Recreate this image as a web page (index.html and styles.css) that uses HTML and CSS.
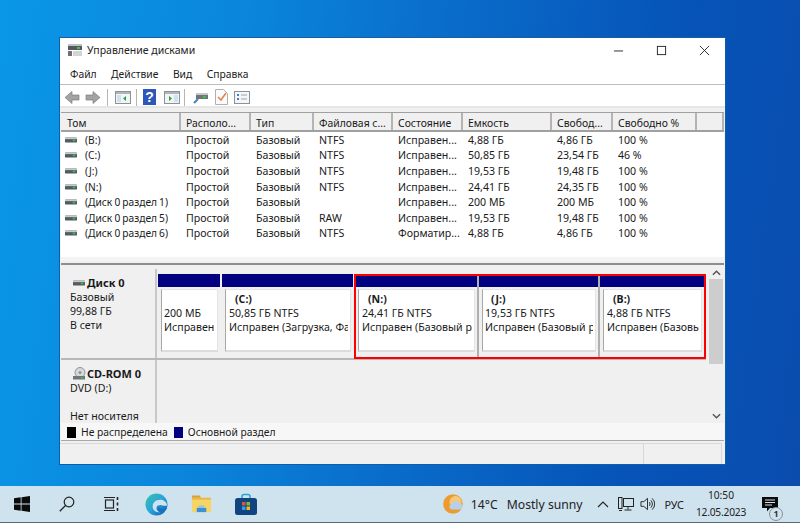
FILE: index.html
```html
<!DOCTYPE html>
<html lang="ru">
<head>
<meta charset="utf-8">
<title>Управление дисками</title>
<link rel="stylesheet" href="styles.css">
</head>
<body>
<svg class="defs" width="0" height="0">
  <symbol id="hdd" viewBox="0 0 14 8">
    <rect x="0" y="1" width="14" height="6" rx="1" fill="#555a5e"/>
    <rect x="0" y="1" width="14" height="2" fill="#c5c9cc"/>
    <rect x="9" y="3.500" width="3" height="2" fill="#35c24a"/>
  </symbol>
</svg>
<div class="desktop">
  <main class="window">
    <header class="titlebar">
      <svg class="app-icon" viewBox="0 0 16 14"><rect x="1" y="1" width="14" height="6" fill="#55595c"/><rect x="1" y="1" width="14" height="2" fill="#bfc3c6"/><rect x="10" y="4" width="3" height="2" fill="#3ec24f"/><rect x="1" y="8" width="4" height="5" fill="#6f6f6f"/><rect x="6" y="8" width="9" height="5" fill="#d4d4d4"/></svg>
      <span class="title">Управление дисками</span>
      <div class="controls">
        <svg viewBox="0 0 12 12"><path d="M1 6.500h10" stroke="#222" stroke-width="1"/></svg>
        <svg viewBox="0 0 12 12"><rect x="1.500" y="1.500" width="9" height="9" fill="none" stroke="#222" stroke-width="1"/></svg>
        <svg viewBox="0 0 12 12"><path d="M1 1l10 10M11 1L1 11" stroke="#222" stroke-width="1"/></svg>
      </div>
    </header>
    <nav class="menubar"><span>Файл</span><span>Действие</span><span>Вид</span><span>Справка</span></nav>
    <div class="toolbar">
      <svg class="tb w16" viewBox="0 0 16 13"><path d="M1 6.500L8 .5v3.500h7v5H8v3.500z" fill="#a2a4a2" stroke="#7c7e7c" stroke-width=".7"/></svg>
      <svg class="tb w16 gap5" viewBox="0 0 16 13"><path d="M15 6.500L8 .5v3.500H1v5h7v3.500z" fill="#a2a4a2" stroke="#7c7e7c" stroke-width=".7"/></svg>
      <i class="tsep s1"></i>
      <svg class="tb w16" viewBox="0 0 16 13"><rect x=".5" y=".5" width="15" height="12" fill="#f2f4f6" stroke="#8b9299"/><rect x="1" y="1" width="14" height="2" fill="#aeb6bd"/><rect x="2" y="4" width="4" height="7" fill="#cfe0ef"/><path d="M11 5v5L8 7.500z" fill="#2f9e44"/></svg>
      <i class="tsep s2"></i>
      <svg class="tb w13" viewBox="0 0 13 16"><rect width="13" height="16" fill="#2d57b8"/><text x="6.500" y="13" class="qmark">?</text></svg>
      <svg class="tb w16 m8" viewBox="0 0 16 13"><rect x=".5" y=".5" width="15" height="12" fill="#f2f4f6" stroke="#8b9299"/><rect x="1" y="1" width="14" height="2" fill="#aeb6bd"/><rect x="10" y="4" width="4" height="7" fill="#cfe0ef"/><path d="M5 5v5l3-2.500z" fill="#2f9e44"/></svg>
      <i class="tsep s3"></i>
      <svg class="tb w16" viewBox="0 0 16 13"><rect x="3" y="2" width="12" height="6" fill="#6f7478"/><rect x="3" y="2" width="12" height="2" fill="#c5c9cc"/><rect x="10" y="5" width="3" height="2" fill="#35c24a"/><path d="M5 8l-4 4" stroke="#4f7fb5" stroke-width="2"/></svg>
      <svg class="tb w13 m7" viewBox="0 0 13 16"><path d="M.5.5h8l4 4v11H.500z" fill="#fbfbfb" stroke="#b0b0b0"/><path d="M3 8l3 3 5-7" fill="none" stroke="#e5804a" stroke-width="1.500"/></svg>
      <svg class="tb w16 m7" viewBox="0 0 16 13"><rect x=".5" y=".5" width="15" height="12" fill="#f4f6f8" stroke="#8b9299"/><path d="M3 4h2M3 8h2" stroke="#3b82d0" stroke-width="2"/><path d="M7 4h6M7 8h6" stroke="#9aa3ab" stroke-width="1"/></svg>
    </div>
    <section class="volumes">
      <div class="row head"><span>Том</span><span>Располо...</span><span>Тип</span><span>Файловая с...</span><span>Состояние</span><span>Емкость</span><span>Свобод...</span><span>Свободно %</span><span></span></div>
      <div class="row"><span class="vol"><svg class="hdd"><use href="#hdd"/></svg>(B:)</span><span>Простой</span><span>Базовый</span><span>NTFS</span><span>Исправен...</span><span>4,88 ГБ</span><span>4,86 ГБ</span><span>100 %</span></div>
      <div class="row"><span class="vol"><svg class="hdd"><use href="#hdd"/></svg>(C:)</span><span>Простой</span><span>Базовый</span><span>NTFS</span><span>Исправен...</span><span>50,85 ГБ</span><span>23,54 ГБ</span><span>46 %</span></div>
      <div class="row"><span class="vol"><svg class="hdd"><use href="#hdd"/></svg>(J:)</span><span>Простой</span><span>Базовый</span><span>NTFS</span><span>Исправен...</span><span>19,53 ГБ</span><span>19,48 ГБ</span><span>100 %</span></div>
      <div class="row"><span class="vol"><svg class="hdd"><use href="#hdd"/></svg>(N:)</span><span>Простой</span><span>Базовый</span><span>NTFS</span><span>Исправен...</span><span>24,41 ГБ</span><span>24,35 ГБ</span><span>100 %</span></div>
      <div class="row"><span class="vol"><svg class="hdd"><use href="#hdd"/></svg>(Диск 0 раздел 1)</span><span>Простой</span><span>Базовый</span><span></span><span>Исправен...</span><span>200 МБ</span><span>200 МБ</span><span>100 %</span></div>
      <div class="row"><span class="vol"><svg class="hdd"><use href="#hdd"/></svg>(Диск 0 раздел 5)</span><span>Простой</span><span>Базовый</span><span>RAW</span><span>Исправен...</span><span>19,53 ГБ</span><span>19,48 ГБ</span><span>100 %</span></div>
      <div class="row"><span class="vol"><svg class="hdd"><use href="#hdd"/></svg>(Диск 0 раздел 6)</span><span>Простой</span><span>Базовый</span><span>NTFS</span><span>Форматир...</span><span>4,88 ГБ</span><span>4,86 ГБ</span><span>100 %</span></div>
    </section>
    <section class="diskpane">
      <div class="disks">
        <div class="disk d0">
          <div class="diskinfo">
            <div class="dname"><svg class="hdd small"><use href="#hdd"/></svg><b>Диск 0</b></div>
            <div>Базовый</div><div>99,88 ГБ</div><div>В сети</div>
          </div>
          <div class="parts">
            <div class="part p1"><div class="bar"></div><div class="pbody"><div class="pline">&nbsp;</div><div class="pline">200 МБ</div><div class="pline">Исправен</div></div></div>
            <div class="part p2"><div class="bar"></div><div class="pbody"><div class="pline lbl">(C:)</div><div class="pline">50,85 ГБ NTFS</div><div class="pline">Исправен (Загрузка, Фа</div></div></div>
            <div class="sel">
              <div class="part p3"><div class="bar"></div><div class="pbody"><div class="pline lbl">(N:)</div><div class="pline">24,41 ГБ NTFS</div><div class="pline">Исправен (Базовый р</div></div></div>
              <div class="part p4"><div class="bar"></div><div class="pbody"><div class="pline lbl">(J:)</div><div class="pline">19,53 ГБ NTFS</div><div class="pline">Исправен (Базовый р</div></div></div>
              <div class="part p5"><div class="bar"></div><div class="pbody"><div class="pline lbl">(B:)</div><div class="pline">4,88 ГБ NTFS</div><div class="pline">Исправен (Базовы</div></div></div>
            </div>
          </div>
        </div>
        <div class="disk d1">
          <div class="diskinfo">
            <div class="dname"><svg class="cd" viewBox="0 0 14 14"><circle cx="8" cy="5.500" r="5" fill="#d6d8da" stroke="#8f9396"/><circle cx="8" cy="5.500" r="1.500" fill="#8f9396"/><rect x="1" y="9" width="12" height="3.500" fill="#6f7478"/><rect x="9" y="10" width="2.500" height="1.500" fill="#35c24a"/></svg><b>CD-ROM 0</b></div>
            <div>DVD (D:)</div><div>&nbsp;</div><div>Нет носителя</div>
          </div>
          <div class="empty"></div>
        </div>
      </div>
      <div class="scroll">
        <svg viewBox="0 0 10 6"><path d="M1 5l4-4 4 4" fill="none" stroke="#555" stroke-width="1.600"/></svg>
        <div class="track"><div class="thumb"></div></div>
        <svg viewBox="0 0 10 6"><path d="M1 1l4 4 4-4" fill="none" stroke="#555" stroke-width="1.600"/></svg>
      </div>
    </section>
    <div class="legend"><i class="sw black"></i><span>Не распределена</span><i class="sw navy"></i><span>Основной раздел</span></div>
    <footer class="status"><div class="cell grow"></div><div class="cell small"></div></footer>
  </main>
  <div class="taskbar">
    <div class="apps">
      <svg class="ti start" viewBox="0 0 16 16"><path d="M0 2.300l6.700-1v6.200H0zM7.500 1.200L16 0v7.500H7.500zM0 8.500h6.700v6.200l-6.700-1zM7.500 8.500H16V16l-8.500-1.200z" fill="#0b0b0b"/></svg>
      <svg class="ti search" viewBox="0 0 16 16"><circle cx="10" cy="6" r="4.800" fill="none" stroke="#222" stroke-width="1.200"/><path d="M6.500 9.500L.8 15.200" stroke="#222" stroke-width="1.300"/></svg>
      <svg class="ti tview" viewBox="0 0 16 16"><rect x="2.500" y="4" width="8" height="8" fill="none" stroke="#222" stroke-width="1.200"/><path d="M1 1.500h11M1 14.500h11" stroke="#222" stroke-width="1.200"/><path d="M14.500 1v3M14.500 6.500v3M14.500 12v3" stroke="#222" stroke-width="1.600"/></svg>
      <svg class="ti edge" viewBox="0 0 24 24"><defs><linearGradient id="eg" x1="0" y1="0" x2="1" y2="1"><stop offset="0" stop-color="#35c4a4"/><stop offset=".5" stop-color="#2aa3dd"/><stop offset="1" stop-color="#0c59a4"/></linearGradient></defs><circle cx="12" cy="12" r="11.500" fill="url(#eg)"/><path d="M23 13c0-4-4-6-7-6-5 0-8 3-8 7 0 4 4 7 8 6-3-.5-4.500-2.500-4-5 .3-1.500 2-2.500 4-2.500 3 0 3.500 1.500 7 .5z" fill="#cfe3ef"/><path d="M16 20c3 0 6-2 7-5-2 1-5 2-7 1-1.500-.7-2.500-2-2.500-3.500-1 3 0 7 2.500 7.500z" fill="#1b6fc2"/></svg>
      <svg class="ti folder" viewBox="0 0 22 20"><path d="M1 1h8l2 3h-10z" fill="#d9a13a"/><rect x="1" y="3.500" width="20" height="15" fill="#f6d565"/><rect x="1" y="3.500" width="20" height="2" fill="#e9b94a"/><path d="M6 18.500v-4.500h10v4.500z" fill="#3f8fd6"/><path d="M8 14v-2.500h6V14z" fill="#8cc4ee"/></svg>
      <svg class="ti store" viewBox="0 0 22 22"><path d="M7 6V3.500a2 2 0 0 1 2-2h4a2 2 0 0 1 2 2V6" fill="none" stroke="#2aa0d8" stroke-width="1.500"/><rect x="0" y="5" width="22" height="17" rx="2.500" fill="#11457f"/><rect x="7" y="9" width="3.500" height="3.500" fill="#e8503a"/><rect x="11.500" y="9" width="3.500" height="3.500" fill="#7dbb3c"/><rect x="7" y="13.500" width="3.500" height="3.500" fill="#2aa0e8"/><rect x="11.500" y="13.500" width="3.500" height="3.500" fill="#f5b81f"/></svg>
    </div>
    <div class="tray">
      <svg class="ti weather" viewBox="0 0 20 20"><circle cx="10" cy="10" r="9.800" fill="#ee9a2e"/><circle cx="12.500" cy="8" r="6" fill="#f6c877"/><path d="M8.500 15.500a3 3 0 0 1 .3-5.800A3.800 3.800 0 0 1 15.800 9a3.200 3.200 0 0 1 1.200 6.500z" fill="#b5d0ea"/></svg>
      <span class="temp">14°C</span>
      <span class="cond">Mostly sunny</span>
      <svg class="ti chev" viewBox="0 0 12 7"><path d="M1 6l5-5 5 5" fill="none" stroke="#222" stroke-width="1.100"/></svg>
      <svg class="ti net" viewBox="0 0 16 15"><rect x="5.500" y="1.500" width="10" height="8" fill="none" stroke="#222"/><rect x=".5" y=".5" width="3.500" height="11" fill="#cfe3ef" stroke="#222"/><path d="M10 9.500v3M6.500 13h7M1 13.500h3" stroke="#222"/></svg>
      <svg class="ti vol-i" viewBox="0 0 16 15"><path d="M1 5h3l4-3.500v12L4 10H1z" fill="none" stroke="#222"/><path d="M10 5.500a3 3 0 0 1 0 4M11.500 3.500a5.500 5.500 0 0 1 0 8M13 1.500a8 8 0 0 1 0 12" fill="none" stroke="#222"/></svg>
      <span class="lang">РУС</span>
      <div class="clock"><div>10:50</div><div class="date">12.05.2023</div></div>
      <div class="notif">
        <svg class="ti bubble" viewBox="0 0 16 15"><path d="M0 0h16v11H8l-3 3.500V11H0z" fill="#0b0b0b"/><path d="M3 3h10M3 5.500h10M3 8h7" stroke="#cfe3ef"/></svg>
        <span class="badge">1</span>
      </div>
    </div>
  </div>
</div>
</body>
</html>
```

FILE: styles.css
```css
* { box-sizing: border-box; }
html, body { margin: 0; width: 800px; height: 523px; overflow: hidden; }
body { font-family: "Noto Sans", "Open Sans", sans-serif; font-size: 10.600px; color: #1a1a1a; }
.defs { position: absolute; }
.desktop {
  position: relative;
  width: 800px;
  height: 523px;
  display: flex;
  flex-direction: column;
  justify-content: flex-end;
  background: linear-gradient(98deg, #0a97e8 0%, #0a86dc 28%, #0a6cca 52%, #0654b8 78%, #0a4cae 100%);
}
.window {
  position: absolute;
  left: 59px;
  top: 37px;
  width: 667px;
  height: 428px;
  background: #f0f0f0;
  border: 1px solid #0f5fa8;
  border-top-color: #1a5ea0;
  display: flex;
  flex-direction: column;
}
.titlebar { height: 24px; background: #fff; display: flex; align-items: center; padding-left: 7px; flex: none; }
.app-icon { width: 16px; height: 14px; margin-right: 4px; }
.title { font-size: 10.500px; color: #222; }
.controls { margin-left: auto; display: flex; align-items: center; }
.controls svg { width: 11px; height: 11px; }
.controls svg:nth-child(1) { margin-right: 32px; }
.controls svg:nth-child(2) { margin-right: 32px; }
.controls svg:nth-child(3) { margin-right: 15px; }
.menubar { height: 23px; background: #fff; display: flex; align-items: center; gap: 14.500px; padding: 2px 0 0 10px; border-bottom: 1px solid #bdbdbd; flex: none; font-size: 10.300px; }
.toolbar { height: 23px; background: #fff; display: flex; align-items: center; padding: 3px 0 0 4px; flex: none; border-bottom: 2px solid #e6e6e6; }
.tb { flex: none; }
.w16 { width: 16px; height: 13px; }
.w13 { width: 13px; height: 16px; }
.gap5 { margin-left: 5px; }
.m8 { margin-left: 8px; }
.m7 { margin-left: 6px; }
.tsep { width: 1px; height: 17px; background: #b5b5b5; flex: none; }
.s1 { margin: 0 7px 0 6px; }
.s2 { margin: 0 6px 0 5px; }
.s3 { margin: 0 8px 0 4px; }
.qmark { font-family: "Liberation Sans", sans-serif; font-weight: 700; font-size: 14px; fill: #fff; text-anchor: middle; }
.volumes { flex: none; height: 149px; margin: 4px 1px 0; background: #fff; border-top: 1px solid #a0a0a0; border-bottom: 4px solid #f4f4f4; }
.row { display: grid; grid-template-columns: 120px 70px 63px 79px 70px 89px 61px 84px 27px; height: 15.600px; align-items: center; }
.row span { padding-left: 5px; white-space: nowrap; overflow: hidden; }
.row .vol { padding-left: 4px; display: flex; align-items: center; font-size: 10.200px; word-spacing: -.5px; }
.head { height: 19px; background: #f0f0f0; border-bottom: 2px solid #a0a0a0; font-size: 10.400px; }
.head span { height: 100%; display: flex; align-items: center; border-right: 2px solid #b4b4b4; padding: 2px 0 0 5px; }
.head span:first-child { padding-left: 6px; }
.hdd { width: 12px; height: 8px; margin-right: 8px; flex: none; }
.hdd.small { margin-right: 2px; }
.diskpane { flex: 1; display: flex; min-height: 0; margin: 2px 1px 0; border-top: 2px solid #8e8e8e; }
.disks { flex: 1; display: flex; flex-direction: column; min-width: 0; }
.disk { display: flex; }
.d0 { height: 95px; border-bottom: 2px solid #b8b8b8; padding-top: 4px; }
.d1 { flex: 1; }
.diskinfo { width: 96px; flex: none; padding: 7px 0 0 9px; background: #f0f0f0; border-right: 2px solid #c8c8c8; line-height: 14px; }
.dname { display: flex; align-items: center; font-size: 11px; padding-left: 3px; }
.d1 .diskinfo { padding-top: 7px; }
.d1 .dname { padding-left: 2px; }
.cd { width: 14px; height: 14px; flex: none; margin-right: 1px; }
.parts { flex: 1; display: flex; padding: 5px 0 0 1px; gap: 2px; }
.part { display: flex; flex-direction: column; height: 80px; }
.sel { display: flex; height: 85px; margin: 0 0 0 -1px; border: 2px solid #f00; width: 352px; }
.sel .part { height: 81px; border-right: 2px solid #b0b0b0; }
.sel .bar { height: 11px; }
.p1 { width: 62px; }
.p2 { width: 131px; }
.p3 { width: 123px; }
.p4 { width: 121px; }
.sel .p5 { flex: 1; min-width: 0; border-right: 0; }
.bar { height: 13px; background: #000080; flex: none; }
.pbody { flex: 1; min-height: 0; background: #fff; margin: 2px 2px 2px 3px; border: 1px solid #e4e4e4; border-left-color: #a8a8a8; border-bottom: 2px solid #dcdcdc; padding: 2px 2px 0 3px; line-height: 14px; white-space: nowrap; }
.p1 .pbody { padding-left: 2px; }
.p3 .pbody { margin-left: 2px; }
.p4 .pbody { padding-left: 2px; }
.sel .pbody { margin-bottom: 5px; }
.pline { overflow: hidden; }
.lbl { font-weight: 700; padding-left: 6px; }
.empty { flex: 1; }
.scroll { width: 14px; flex: none; margin: 0 1px 0 3px; display: flex; flex-direction: column; align-items: center; background: #f0f0f0; padding: 5px 0 4px; }
.scroll svg { width: 9px; height: 6px; flex: none; }
.track { flex: 1; width: 100%; margin: 3px 0; }
.thumb { height: 85px; background: #cdcdcd; }
.legend { height: 18px; flex: none; display: flex; align-items: center; padding: 1px 0 0 6px; background: #f7f7f7; margin: 0 1px; border-bottom: 1px solid #a8a8a8; font-size: 10.300px; }
.sw { width: 9px; height: 11px; flex: none; }
.sw.black { background: #000; margin-right: 5px; }
.sw.navy { background: #000080; margin: 0 5px 0 6px; }
.status { height: 21px; flex: none; display: flex; margin-top: 2px; }
.cell { border-right: 1px solid #d8d8d8; border-top: 1px solid #d8d8d8; }
.cell.grow { width: 584px; }
.cell.small { width: 78px; }
.taskbar { height: 37px; background: #cfe3ef; border-bottom: 1px solid #5a6670; display: flex; justify-content: space-between; flex: none; }
.apps, .tray { display: flex; align-items: center; }
.ti { flex: none; }
.start { width: 16px; height: 16px; margin-left: 14px; }
.search { width: 16px; height: 16px; margin-left: 29px; }
.tview { width: 16px; height: 16px; margin-left: 28px; }
.edge { width: 23px; height: 23px; margin-left: 26px; }
.folder { width: 21px; height: 20px; margin-left: 23px; }
.store { width: 22px; height: 24px; margin-left: 23px; }
.tray { font-size: 12.200px; color: #222; }
.weather { width: 20px; height: 20px; }
.temp { margin-left: 8px; }
.cond { margin-left: 9px; }
.chev { width: 12px; height: 7px; margin-left: 14px; }
.net { width: 16px; height: 15px; margin-left: 9px; }
.vol-i { width: 15px; height: 14px; margin-left: 6px; }
.lang { font-size: 10.800px; margin-left: 10px; }
.clock { width: 62px; margin-left: 6px; text-align: center; font-size: 10.200px; line-height: 17px; }
.date { letter-spacing: -.2px; }
.notif { position: relative; width: 38px; height: 100%; display: flex; align-items: center; margin-left: 10px; }
.bubble { width: 16px; height: 15px; margin-top: 0; }
.badge { position: absolute; left: 7px; top: 21px; width: 14px; height: 14px; border-radius: 50%; background: #cfe3ef; border: 1.500px solid #8a8f93; font-size: 9px; line-height: 11px; text-align: center; font-weight: 700; color: #333; }
```
